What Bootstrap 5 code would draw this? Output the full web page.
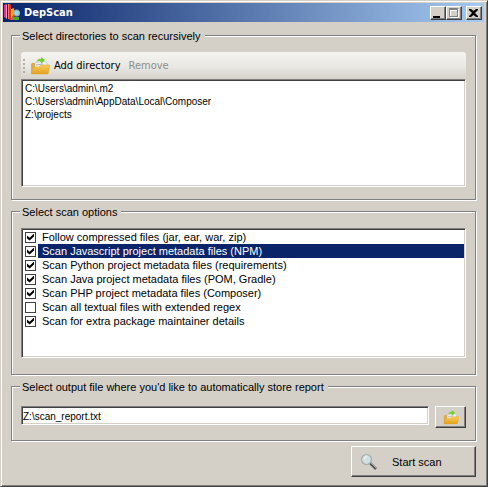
<!DOCTYPE html>
<html lang="en">
<head>
<meta charset="utf-8">
<meta name="viewport" content="width=device-width, initial-scale=1">
<title>DepScan</title>
<link href="https://cdn.jsdelivr.net/npm/bootstrap@5.3.0/dist/css/bootstrap.min.css" rel="stylesheet">
<style>
:root { --face: #d4d0c8; --shade: #808080; --dark: #404040; --navy: #0a246a; }
body { background: var(--face); color: #000; font: 11px/14px "Liberation Sans", Arial, sans-serif; }
.app-window { min-height: 100vh; border: 1px solid; border-color: var(--face) var(--dark) var(--dark) var(--face); box-shadow: inset 1px 1px #fff, inset -1px -1px var(--shade); padding: 2px 3px 8px 2px; }
.title-strip { height: 19px; background: linear-gradient(90deg, #0a246a, #a6caf0); color: #fff; padding: 0 2px 0 1px; }
.title-text { font: bold 11px/18px "DejaVu Sans Condensed", "DejaVu Sans", Tahoma, sans-serif; margin-left: 3px; }
.raised { background: var(--face); color: #000; border: 1px solid; border-color: #fff var(--dark) var(--dark) #fff; border-radius: 0; box-shadow: inset -1px -1px var(--shade); padding: 0; }
.caption-btn { width: 16px; height: 14px; line-height: 0; }
.caption-btn svg { display: block; }
.window-body { padding: 5px 8px 0; gap: 3px; }
.group { border: 1px solid var(--shade); box-shadow: 1px 1px #fff, inset 1px 1px #fff; padding: 0 9px 12px; }
.group legend { font-size: 11px; line-height: 14px; background: var(--face); padding: 2px 4px 0 2px; margin: 0 0 0 -1px; }
.group-body { padding-top: 9px; }
.sunken { background: #fff; color: #000; border: 1px solid; border-color: var(--shade) #fff #fff var(--shade); border-radius: 0; box-shadow: inset 1px 1px var(--dark), inset -1px -1px var(--face); }
.tool-strip { height: 27px; background: linear-gradient(#f5f4f2, #e8e7e2 55%, #d5d2ca); border-radius: 3px 3px 0 0; padding-left: 2px; font: 11px/16px "DejaVu Sans Condensed", "DejaVu Sans", Tahoma, sans-serif; }
.tool-strip button { background: none; border: 0; padding: 0; color: #000; }
.tool-strip button:disabled { color: #8d8d8d; }
.path-list { display: block; width: 100%; height: 108px; padding: 3px 2px; font-size: 10px; outline: 0; overflow: hidden; }
.path-list option { padding: 0 1px; min-height: 13px; line-height: 13px; }
.option-list { height: 130px; padding: 1px 1px 1px 3px; }
.option-row { height: 14px; }
.option-row label { flex: 1; padding-left: 4px; white-space: nowrap; line-height: 14px; }
.option-row.chosen label { background: var(--navy); color: #fff; }
.tick { appearance: none; width: 11px; height: 11px; margin: 0 2px 0 0; border: 1px solid var(--dark); background: #fff; display: grid; place-items: center; flex: none; }
.tick:checked::before { content: ""; width: 7px; height: 7px; background: #000; clip-path: polygon(0 29%, 38% 62%, 100% 0, 100% 43%, 38% 100%, 0 71%); }
.out-row { gap: 6px; padding-top: 12px; }
.out-path { height: 19px; padding: 2px 1px 0; font-size: 10px; min-width: 0; }
.browse { width: 31px; height: 22px; }
.start { width: 125px; height: 31px; padding-left: 8px; gap: 14px; margin-top: 2px; }
</style>
</head>
<body>
<svg width="0" height="0" class="position-absolute" aria-hidden="true">
  <defs>
    <linearGradient id="gold" x1="0" y1="0" x2="0" y2="1"><stop offset="0" stop-color="#f9cf5c"/><stop offset="1" stop-color="#e1a01e"/></linearGradient>
    <symbol id="folder" viewBox="0 0 20 18">
      <path d="M1 16V7l1-1h4l1 1h8v9z" fill="#e0ac42"/>
      <path d="M5 6l9-2 3 2v7H5z" fill="#eef1f2" stroke="#b8bec0" stroke-width=".6"/>
      <path d="M6 8l7-1" stroke="#9aa8b0" stroke-width=".8"/>
      <path d="M1 17l3-7h5l2-2h9l-2 9z" fill="url(#gold)" stroke="#e0a52c" stroke-width=".5"/>
      <path d="M6 5q2-4 5-3V0l4 3-4 4V5Q9 3 6 5z" fill="#72cf29"/>
    </symbol>
  </defs>
</svg>
<main class="app-window">
  <header class="title-strip d-flex align-items-center">
    <svg width="17" height="17" viewBox="0 0 17 17" aria-hidden="true">
      <path d="M0 1l2-1v14l-2-1z" fill="#e52b98"/><path d="M2 0l1 1v14l-1-1z" fill="#ff9ac4"/>
      <path d="M4 0h2l1 1v15l-3-1z" fill="#f02c1c"/><path d="M4 0h1v15H4z" fill="#ff755a"/>
      <path d="M7 5l3-1v11l-3 1z" fill="#f4a91d"/><path d="M7 5h1v10H7z" fill="#ffe35a"/>
      <path d="M9 13h6v3H9z" fill="#4da82f"/>
      <circle cx="12.500" cy="9" r="3" fill="#8fd7e8" stroke="#9aa6ad" stroke-width="1.200"/>
      <path d="M10.500 11l-3 4" stroke="#a8652b" stroke-width="1.500"/>
    </svg>
    <span class="title-text flex-grow-1">DepScan</span>
    <button class="raised caption-btn" aria-label="Minimize"><svg width="14" height="12"><path d="M2 9h7v2H2z"/></svg></button>
    <button class="raised caption-btn" aria-label="Maximize"><svg width="14" height="12" fill="none" stroke-width="1"><path d="M3.500 3.500h8v7h-8zM3 2.500h9" stroke="#fff"/><path d="M2.500 2.500h8v7h-8zM2 1.500h9" stroke="#808080"/></svg></button>
    <button class="raised caption-btn ms-1" aria-label="Close"><svg width="14" height="12"><path d="M2 2h2l2.500 2L9 2h2v1L8 6l3 3v1H9L6.500 8 4 10H2V9l3-3-3-3z"/></svg></button>
  </header>

  <div class="window-body d-flex flex-column">
    <fieldset class="group">
      <legend class="float-none w-auto">Select directories to scan recursively</legend>
      <div class="group-body">
        <div class="tool-strip d-flex align-items-center" role="toolbar" aria-label="Directories">
          <svg width="3" height="16" fill="#b0aea8" aria-hidden="true"><path d="M0 1h2v2H0zM0 5h2v2H0zM0 9h2v2H0zM0 13h2v2H0z"/></svg>
          <button class="d-flex align-items-center ms-1"><svg width="20" height="18" class="me-1" aria-hidden="true"><use href="#folder"/></svg>Add directory</button>
          <button class="ms-2" disabled>Remove</button>
        </div>
        <select class="path-list sunken" multiple aria-label="Directories to scan">
          <option>C:\Users\admin\.m2</option>
          <option>C:\Users\admin\AppData\Local\Composer</option>
          <option>Z:\projects</option>
        </select>
      </div>
    </fieldset>

    <fieldset class="group pb-3">
      <legend class="float-none w-auto">Select scan options</legend>
      <div class="group-body">
        <div class="option-list sunken">
          <div class="option-row d-flex align-items-center"><input class="tick" type="checkbox" id="o1" checked><label for="o1">Follow compressed files (jar, ear, war, zip)</label></div>
          <div class="option-row chosen d-flex align-items-center"><input class="tick" type="checkbox" id="o2" checked><label for="o2">Scan Javascript project metadata files (NPM)</label></div>
          <div class="option-row d-flex align-items-center"><input class="tick" type="checkbox" id="o3" checked><label for="o3">Scan Python project metadata files (requirements)</label></div>
          <div class="option-row d-flex align-items-center"><input class="tick" type="checkbox" id="o4" checked><label for="o4">Scan Java project metadata files (POM, Gradle)</label></div>
          <div class="option-row d-flex align-items-center"><input class="tick" type="checkbox" id="o5" checked><label for="o5">Scan PHP project metadata files (Composer)</label></div>
          <div class="option-row d-flex align-items-center"><input class="tick" type="checkbox" id="o6"><label for="o6">Scan all textual files with extended regex</label></div>
          <div class="option-row d-flex align-items-center"><input class="tick" type="checkbox" id="o7" checked><label for="o7">Scan for extra package maintainer details</label></div>
        </div>
      </div>
    </fieldset>

    <fieldset class="group">
      <legend class="float-none w-auto">Select output file where you'd like to automatically store report</legend>
      <div class="out-row d-flex align-items-start">
        <input class="out-path sunken flex-grow-1" type="text" value="Z:\scan_report.txt" aria-label="Output file">
        <button class="raised browse d-flex align-items-center justify-content-center" aria-label="Browse"><svg width="16" height="15" aria-hidden="true"><use href="#folder"/></svg></button>
      </div>
    </fieldset>

    <button class="raised start align-self-end d-flex align-items-center">
      <svg width="18" height="18" viewBox="0 0 18 18" aria-hidden="true"><path d="M10 10l6 6" stroke="#555" stroke-width="2.500"/><path d="M11 10l5 5" stroke="#aaa"/><circle cx="6.500" cy="6.500" r="5" fill="#cfe0df" stroke="#a3abab" stroke-width="1.200"/><path d="M4 6q0-2 3-2.500" fill="none" stroke="#fff"/></svg>
      <span>Start scan</span>
    </button>
  </div>
</main>
<script src="https://cdn.jsdelivr.net/npm/bootstrap@5.3.0/dist/js/bootstrap.bundle.min.js"></script>
</body>
</html>
